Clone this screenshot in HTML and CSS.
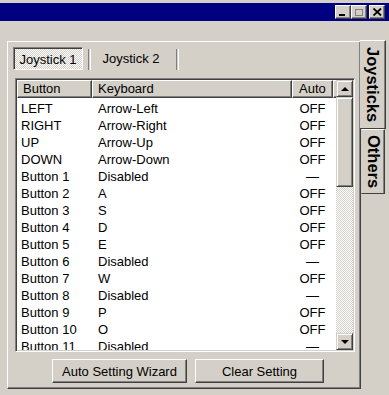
FILE: index.html
```html
<!DOCTYPE html>
<html lang="en">
<head>
<meta charset="UTF-8" />
<title>Joystick Settings</title>
<link rel="stylesheet" href="styles.css">
</head>
<body>

<div class="titlebar">
  <span class="cap-btn">
    <svg width="8" height="8" viewBox="0 0 8 8"><rect x="0" y="6" width="6" height="2" fill="#000"/></svg>
  </span>
  <span class="cap-btn disabled">
    <svg width="10" height="9" viewBox="0 0 10 9"><rect x="1.5" y="1.5" width="7" height="6" fill="none" stroke="#808080"/><rect x="1" y="1" width="8" height="1" fill="#808080"/></svg>
  </span>
  <span class="cap-btn close">
    <svg width="9" height="8" viewBox="0 0 9 8"><path d="M0.5 0.5 L8 7.5 M8 0.5 L0.5 7.5" stroke="#000" stroke-width="1.8"/></svg>
  </span>
</div>

<div class="client">
  <div class="panel">
    <div class="subtabs">
      <div class="subtab active">Joystick 1</div>
      <div class="sep"></div>
      <div class="subtab">Joystick 2</div>
      <div class="sep"></div>
    </div>

    <div class="listview">
      <div class="lv-main">
        <div class="lv-header">
          <div class="col c1">Button</div>
          <div class="col c2">Keyboard</div>
          <div class="col c3">Auto</div>
          <div class="col c4"></div>
        </div>
        <div class="lv-rows" id="rows"></div>
      </div>
      <div class="scrollbar">
        <div class="sb-btn"><span class="arrow up"></span></div>
        <div class="sb-thumb"></div>
        <div class="sb-track"></div>
        <div class="sb-btn"><span class="arrow down"></span></div>
      </div>
    </div>

    <div class="actions">
      <button class="btn wizard">Auto Setting Wizard</button>
      <button class="btn clear">Clear Setting</button>
    </div>
  </div>

  <div class="sidetabs">
    <div class="sidetab active">Joysticks</div>
    <div class="sidetab">Others</div>
  </div>
</div>

<script>
  const mappings = [
    ["LEFT", "Arrow-Left", "OFF"],
    ["RIGHT", "Arrow-Right", "OFF"],
    ["UP", "Arrow-Up", "OFF"],
    ["DOWN", "Arrow-Down", "OFF"],
    ["Button 1", "Disabled", "—"],
    ["Button 2", "A", "OFF"],
    ["Button 3", "S", "OFF"],
    ["Button 4", "D", "OFF"],
    ["Button 5", "E", "OFF"],
    ["Button 6", "Disabled", "—"],
    ["Button 7", "W", "OFF"],
    ["Button 8", "Disabled", "—"],
    ["Button 9", "P", "OFF"],
    ["Button 10", "O", "OFF"],
    ["Button 11", "Disabled", "—"]
  ];

  // the last row is cut by the list's bottom edge, as in the real dialog
  const rows = document.getElementById("rows");
  for (const [btn, key, auto] of mappings) {
    const row = document.createElement("div");
    row.className = "row";
    row.innerHTML = `<div class="cell c1">${btn}</div><div class="cell c2">${key}</div><div class="cell c3">${auto}</div>`;
    rows.appendChild(row);
  }
</script>

</body>
</html>
```

FILE: styles.css
```css
body {
  margin: 0;
  width: 389px;
  height: 395px;
  overflow: hidden;
  background: #d4d0c8;
  color: #000;
  font-family: "Liberation Sans", Arial, sans-serif;
  font-size: 13px;
}
.titlebar {
  margin-top: 3px;
  height: 18px;
  background: #000080;
  display: flex;
  justify-content: flex-end;
  align-items: center;
  padding-right: 4px;
}
.cap-btn {
  width: 14px;
  height: 12px;
  background: #d4d0c8;
  border: 1px solid;
  border-color: #fff #404040 #404040 #fff;
  box-shadow: inset -1px -1px #808080;
  display: flex;
  align-items: center;
  justify-content: center;
}
.cap-btn.close {
  margin-left: 2px;
}
.client {
  display: flex;
  padding: 20px 0 0 7px;
}
.panel {
  box-sizing: border-box;
  width: 354px;
  height: 348px;
  border: 1px solid;
  border-color: #fff #404040 #404040 #fff;
  box-shadow: inset -1px -1px #808080;
  padding: 5px 0 0 5px;
}
.subtabs {
  display: flex;
  height: 23px;
}
.subtab {
  box-sizing: border-box;
  display: flex;
  align-items: center;
  justify-content: center;
  width: 80px;
}
.subtab.active {
  width: 70px;
  border: 1px solid;
  border-color: #808080 #fff #fff #808080;
  box-shadow: inset 1px 1px #404040;
  background: repeating-conic-gradient(#d4d0c8 0 25%, #fff 0 50%) 0 0 / 2px 2px;
  padding-top: 2px;
}
.sep {
  width: 1px;
  margin: 2px 0 0 5px;
  border-left: 1px solid #808080;
  border-right: 1px solid #fff;
}
.listview {
  box-sizing: border-box;
  width: 340px;
  height: 274px;
  margin: 8px 0 0 2px;
  border: 1px solid;
  border-color: #808080 #fff #fff #808080;
  box-shadow: inset 1px 1px #404040, inset -1px -1px #d4d0c8;
  padding: 1px;
  display: flex;
}
.lv-main {
  flex: 1;
  background: #fff;
  overflow: hidden;
}
.lv-header {
  display: flex;
  height: 18px;
  background: #d4d0c8;
}
.col {
  box-sizing: border-box;
  border: 1px solid;
  border-color: #fff #404040 #404040 #fff;
  box-shadow: inset -1px -1px #808080;
  line-height: 16px;
  padding-left: 5px;
}
.c1 {
  width: 75px;
  flex-shrink: 0;
}
.c2 {
  width: 200px;
  flex-shrink: 0;
}
.c3 {
  width: 41px;
  flex-shrink: 0;
}
.col.c3 {
  padding-left: 6px;
}
.c4 {
  flex: 1;
}
.lv-rows {
  padding-top: 2px;
}
.row {
  display: flex;
  height: 17px;
  line-height: 17px;
}
.cell.c1 {
  padding-left: 4px;
  box-sizing: border-box;
}
.cell.c2 {
  padding-left: 6px;
  box-sizing: border-box;
}
.cell.c3 {
  text-align: center;
}
.scrollbar {
  width: 17px;
  display: flex;
  flex-direction: column;
}
.sb-btn, .sb-thumb {
  box-sizing: border-box;
  background: #d4d0c8;
  border: 1px solid;
  border-color: #d4d0c8 #404040 #404040 #d4d0c8;
  box-shadow: inset 1px 1px #fff, inset -1px -1px #808080;
}
.sb-btn {
  height: 17px;
  display: flex;
  align-items: center;
  justify-content: center;
}
.sb-thumb {
  height: 90px;
}
.sb-track {
  flex: 1;
  background: repeating-conic-gradient(#d4d0c8 0 25%, #fff 0 50%) 0 0 / 2px 2px;
}
.arrow {
  width: 0;
  height: 0;
  border-left: 4px solid transparent;
  border-right: 4px solid transparent;
}
.arrow.up {
  border-bottom: 4px solid #000;
}
.arrow.down {
  border-top: 4px solid #000;
}
.actions {
  display: flex;
  gap: 8px;
  margin: 7px 0 0 39px;
}
.btn {
  box-sizing: border-box;
  height: 24px;
  font: inherit;
  color: #000;
  background: #d4d0c8;
  border: 1px solid;
  border-color: #fff #404040 #404040 #fff;
  box-shadow: inset -1px -1px #808080;
  padding: 0;
}
.btn.wizard {
  width: 135px;
}
.btn.clear {
  width: 129px;
}
.sidetabs {
  display: flex;
  flex-direction: column;
}
.sidetab {
  box-sizing: border-box;
  writing-mode: vertical-rl;
  font-weight: bold;
  font-size: 16.5px;
  display: flex;
  align-items: center;
  justify-content: center;
  width: 24px;
  height: 65px;
  border: 1px solid;
  border-color: #fff #404040 #404040 transparent;
  box-shadow: inset -1px 0 #808080;
}
.sidetab.active {
  width: 26px;
  height: 89px;
  margin: -1px 0 0 -1px;
  background: #d4d0c8;
  border-left: none;
}
```
